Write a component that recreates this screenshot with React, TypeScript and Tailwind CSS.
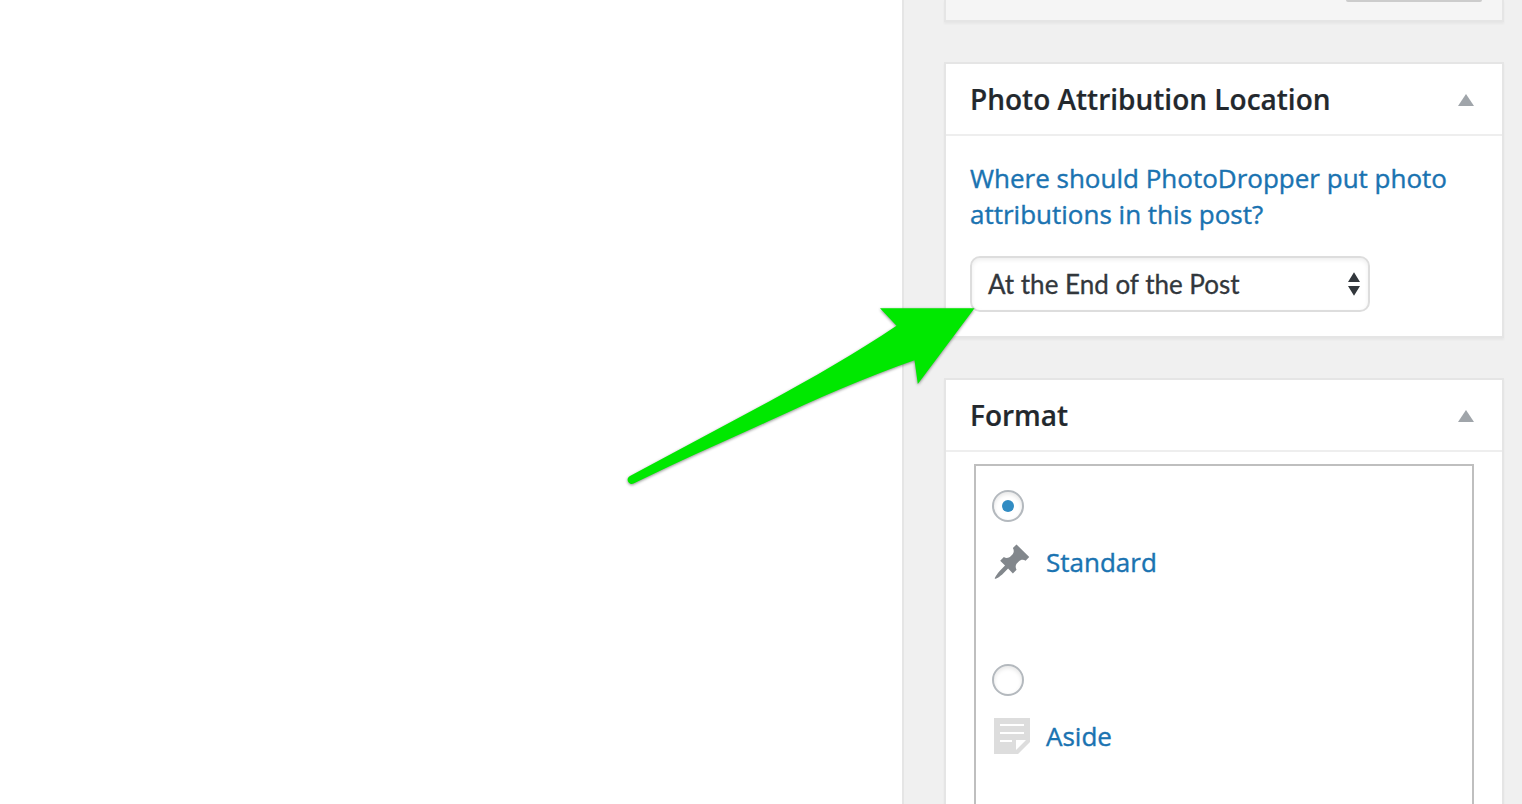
import type { ReactNode } from "react";

function Panel({ title, className, children }: { title: string; className: string; children: ReactNode }) {
  return (
    <section className={`border-2 border-[#e5e5e5] bg-white shadow-[0_2px_2px_rgba(0,0,0,0.04)] ${className}`}>
      <header className="flex h-[72px] items-center justify-between border-b-2 border-[#eeeeee] pr-7 pl-6">
        <h2 className="text-[28px] leading-10 font-semibold text-[#23282d] [-webkit-text-stroke:0.2px_#23282d]">{title}</h2>
        <svg className="mt-0.5 h-3 w-4" viewBox="0 0 16 12" fill="#a0a5aa">
          <path d="M8 0l8 12H0z" />
        </svg>
      </header>
      {children}
    </section>
  );
}

function Radio({ checked = false }: { checked?: boolean }) {
  return (
    <span
      role="radio"
      aria-checked={checked}
      className="flex size-8 items-center justify-center rounded-full border-2 border-[#b4b9be] bg-white shadow-[inset_0_2px_4px_rgba(0,0,0,0.1)]"
    >
      {checked && <span className="size-3 rounded-full bg-[#318cc3]" />}
    </span>
  );
}

function FormatOption({ label, icon, color, checked }: { label: string; icon: string; color: string; checked?: boolean }) {
  return (
    <div className="h-[174px]">
      <Radio checked={checked} />
      <div className="mt-5 flex h-10 items-center gap-3.5">
        <svg className="size-10" viewBox="0 0 20 20" fill={color}>
          <path d={icon} />
        </svg>
        <span className="text-[26px] leading-9 text-[#1a73b1] [-webkit-text-stroke:0.4px_#1a73b1]">{label}</span>
      </div>
    </div>
  );
}

const PIN =
  "M10.44 3.02l1.82-1.82 6.36 6.35-1.83 1.82c-1.05-.68-2.48-.57-3.41.36l-.75.75c-.92.93-1.04 2.35-.35 3.41l-1.83 1.82-2.41-2.41-2.8 2.79c-.42.42-3.38 2.71-3.8 2.29s1.86-3.39 2.28-3.81l2.79-2.79L4.1 9.36l1.83-1.82c1.05.69 2.48.57 3.4-.36l.75-.75c.93-.92 1.05-2.35.36-3.41z";
const NOTE = "M1 1h18v12l-6 6H1V1zm3 3v1h12V4H4zm0 4v1h12V8H4zm6 5v-1H4v1h6zm2 4l5-5h-5v5z";

export default function App() {
  return (
    <div className="relative flex h-[804px] w-[1522px] overflow-hidden bg-white font-['Open_Sans','Noto_Sans',sans-serif]">
      <main className="flex-1" />
      <aside className="w-[620px] shrink-0 border-l-2 border-[#e5e5e5] bg-[#f0f0f0] pr-[18px] pl-10">
        <div className="flex h-[22px] items-start justify-end border-x-2 border-b-2 border-[#e5e5e5] bg-[#f5f5f5] pr-5 shadow-[0_2px_2px_rgba(0,0,0,0.04)]">
          <div className="h-0.5 w-[136px] rounded-b-[4px] bg-[#cccccc]" />
        </div>

        <Panel title="Photo Attribution Location" className="mt-10 h-[276px]">
          <div className="px-6 pt-6">
            <p className="text-[26px] leading-9 text-[#1a73b1] [-webkit-text-stroke:0.4px_#1a73b1]">
              Where should PhotoDropper put photo
              <br />
              attributions in this post?
            </p>
            <div className="mt-6 flex h-14 w-[400px] items-center justify-between rounded-[10px] border-2 border-[#dddddd] bg-white pr-2 pl-4 shadow-[inset_0_2px_4px_rgba(0,0,0,0.07)]">
              <span className="font-['Lato',sans-serif] text-[26px] leading-9 text-[#32373c] [-webkit-text-stroke:0.3px_#32373c]">At the End of the Post</span>
              <svg className="h-6 w-3" viewBox="0 0 12 24" fill="#32373c">
                <path d="M6 0.3l6 9.7H0zM0 14h12l-6 9.7z" />
              </svg>
            </div>
          </div>
        </Panel>

        <Panel title="Format" className="mt-10 h-[500px]">
          <div className="mx-7 mt-3 h-[400px] border-2 border-[#bfbfbf] px-4 pt-6">
            <FormatOption label="Standard" icon={PIN} color="#82878c" checked />
            <FormatOption label="Aside" icon={NOTE} color="#dddddd" />
          </div>
        </Panel>
      </aside>

      <svg
        className="pointer-events-none absolute top-[300px] left-[620px] h-[200px] w-[370px] drop-shadow-[0_1.5px_1.5px_rgba(0,0,0,0.45)]"
        viewBox="620 300 370 200"
        fill="#00e800"
      >
        <path d="M974.500 308.300H880L896.500 325.700C857 352.500 812 378 770 401L630 476A4 4 0 0 0 633.500 483.500L670 466C704 450 737 435.500 770 420.500C817 399 866 377 914.500 360.300L917.800 384z" />
      </svg>
    </div>
  );
}
